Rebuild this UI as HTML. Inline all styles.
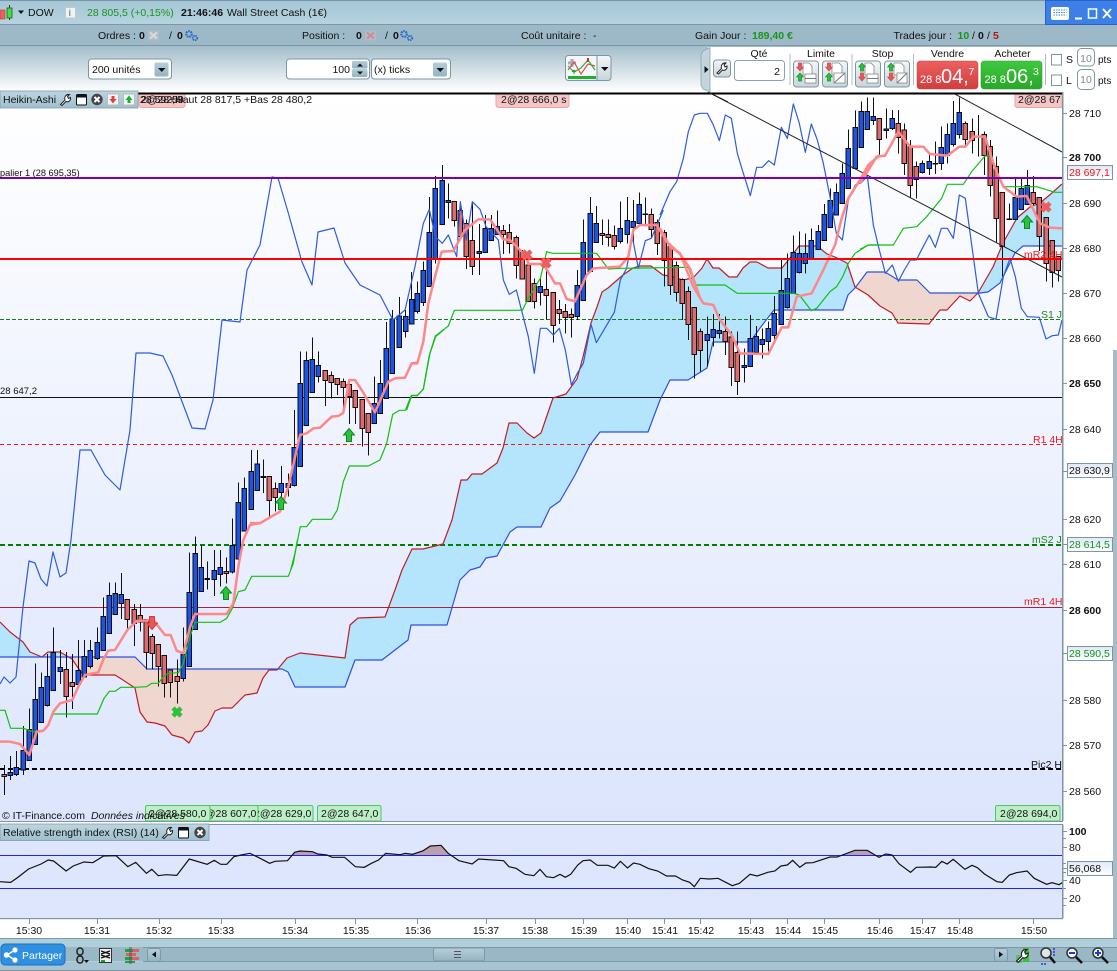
<!DOCTYPE html>
<html>
<head>
<meta charset="utf-8">
<style>
html,body{margin:0;padding:0;background:#fff;width:1117px;height:971px;overflow:hidden}
svg{display:block;position:absolute;left:0;top:0}
text{font-family:"Liberation Sans",sans-serif;font-size:10.5px;fill:#111}
.w{stroke:#111;stroke-width:3;fill:none}
.b{fill:#1a55e8;stroke:#0b0b18;stroke-width:3}
.r{fill:#de6c6c;stroke:#1a0a0a;stroke-width:3}
.nb{font-weight:bold}
.k{fill:none;stroke-linejoin:round}
</style>
</head>
<body>
<svg width="1117" height="971" viewBox="0 0 1117 971" xmlns="http://www.w3.org/2000/svg">
<defs>
<linearGradient id="bg" x1="0" y1="0" x2="0" y2="1"><stop offset="0" stop-color="#ffffff"/><stop offset="1" stop-color="#dce5fd"/></linearGradient>
<linearGradient id="g1" x1="0" y1="0" x2="0" y2="1"><stop offset="0" stop-color="#a4c6d6"/><stop offset="1" stop-color="#b6d3df"/></linearGradient>
<linearGradient id="g3" x1="0" y1="0" x2="0" y2="1"><stop offset="0" stop-color="#a2bdca"/><stop offset="1" stop-color="#ffffff"/></linearGradient>
<linearGradient id="tab" x1="0" y1="0" x2="0" y2="1"><stop offset="0" stop-color="#bcd6e1"/><stop offset="1" stop-color="#9fbfcc"/></linearGradient>
<linearGradient id="btn" x1="0" y1="0" x2="0" y2="1"><stop offset="0" stop-color="#b5cfda"/><stop offset="1" stop-color="#93b3c2"/></linearGradient>
<linearGradient id="ven" x1="0" y1="0" x2="0" y2="1"><stop offset="0" stop-color="#ec6060"/><stop offset="1" stop-color="#d23e3e"/></linearGradient>
<linearGradient id="ach" x1="0" y1="0" x2="0" y2="1"><stop offset="0" stop-color="#40c840"/><stop offset="1" stop-color="#28a828"/></linearGradient>
<linearGradient id="box" x1="0" y1="0" x2="0" y2="1"><stop offset="0" stop-color="#dfe8f6"/><stop offset="1" stop-color="#ffffff"/></linearGradient>
<linearGradient id="ord" x1="0" y1="0" x2="0" y2="1"><stop offset="0" stop-color="#f4f7f8"/><stop offset="1" stop-color="#c7d5dc"/></linearGradient>
<clipPath id="chart"><rect x="0" y="94" width="1062" height="727"/></clipPath>
<clipPath id="cb"><rect x="0" y="0" width="73" height="971"/><rect x="278" y="0" width="577" height="971"/><rect x="978" y="0" width="84" height="971"/></clipPath>
<clipPath id="cp"><rect x="73" y="0" width="205" height="971"/><rect x="855" y="0" width="123" height="971"/></clipPath>
<path id="cloud" d="M0 622L10 632 23 642 30 652 42 657 48 652 60 652 72 659 83 675 115 675 123 680 135 688 140 712 147 722 155 723 165 726 172 735 183 738 189 743 195 732 202 731 208 725 215 711 222 708 232 708 245 695 257 693 263 678 269 670 277 670 287 658 300 653 345 658 350 625 358 618 385 617 395 590 402 570 412 549 423 549 443 544 452 520 461 480 467 480 472 474 482 474 497 463 503 448 509 423 517 423 527 433 534 438 541 433 553 398 566 394 577 379 583 357 591 323 597 307 602 292 608 288 623 275 633 268 640 266 651 266 663 275 670 276 683 280 693 278 702 268 707 259 713 268 719 268 729 277 737 277 743 268 750 262 757 262 768 268 782 268 790 258 799 246 817 246 827 254 835 257 847 263 855 287 868 295 880 306 892 313 898 323 929 324 940 310 947 310 960 296 970 301 978 293 993 267 1003 243 1017 218 1030 207 1040 203 1052 193 1062 184L1062 246 1023 246 1015 253 1000 283 988 292 980 293 930 293 917 280 898 280 885 272 867 272 855 288 848 295 843 310 774 310 760 328 750 342 713 342 707 368 688 380 670 380 660 400 648 432 600 432 590 445 575 475 560 501 550 508 541 527 517 527 510 532 497 556 486 558 480 567 470 570 460 580 447 625 411 625 408 640 382 660 355 660 345 687 295 687 288 672 282 669 147 669 135 657 0 657Z"/>
<path id="wr" d="M0.5 10.5L5 6C4 3 6 0 9.5 0.5L7.5 2.5 8.5 4.5 10.5 3.500C11 7 8 8.5 6 7.5L2 11.5Z" fill="#fff" stroke="#222" stroke-width="1"/>
<path id="up" d="M0 -6.5L5.5 0H2.5V6.5H-2.5V0H-5.5Z" fill="#2cc03c" stroke="#0f8a20" stroke-width="1"/>
<path id="dn" d="M0 6.5L5.5 0H2.5V-6.5H-2.5V0H-5.5Z" fill="#e85858" stroke="#d04040" stroke-width="1"/>
<path id="xr" d="M-4 -4L4 4M4 -4L-4 4" fill="none" stroke-width="4.5"/>
<g id="gear"><circle cx="4" cy="4" r="2.8" fill="none" stroke="#2468c8" stroke-width="2" stroke-dasharray="1.6 .8"/><circle cx="10" cy="8" r="2.2" fill="none" stroke="#2468c8" stroke-width="1.8" stroke-dasharray="1.4 .7"/></g>
<g id="ci"><circle cx="6" cy="6" r="5.7" fill="#444"/><path d="M3.5 3.5L8.5 8.5M8.5 3.5L3.5 8.5" stroke="#fff" stroke-width="2"/></g>
<g id="wi"><rect x=".5" y=".5" width="10" height="10.5" rx="1" fill="#fff" stroke="#111"/><rect x=".5" y=".5" width="10" height="3" fill="#111"/></g>
</defs>

<!-- top bars -->
<rect x="0" y="0" width="1117" height="25" fill="url(#g1)"/>
<rect x="0" y="0" width="1117" height="1" fill="#7896a6"/>
<rect x="0" y="24" width="1117" height="1" fill="#7c98a8"/>
<rect x="0" y="25" width="1117" height="21" fill="#9db8c6"/>
<rect x="0" y="45" width="1117" height="1.5" fill="#7a98a8"/>
<rect x="0" y="46" width="1117" height="46" fill="url(#g3)"/>

<!-- main chart background -->
<rect x="0" y="92" width="1062" height="729" fill="url(#bg)"/>
<rect x="1063" y="92" width="54" height="846" fill="#fff"/>

<!-- chart -->
<g clip-path="url(#chart)">
<use href="#cloud" fill="#b4e5fc" clip-path="url(#cb)"/>
<use href="#cloud" fill="#efd6cf" clip-path="url(#cp)"/>
<path d="M0 319.5H1062" stroke="#1a7a1a" stroke-dasharray="4 2" stroke-width="1"/>
<path d="M0 397.5H1062" stroke="#111" stroke-width="1"/>
<path d="M0 444.5H1062" stroke="#f01818" stroke-dasharray="4 3" stroke-width="1"/>
<path d="M0 545H1062" stroke="#008000" stroke-dasharray="5 3" stroke-width="2"/>
<path d="M0 607.5H1062" stroke="#a82238" stroke-width="1"/>
<path d="M0 769H1062" stroke="#000" stroke-dasharray="5 3" stroke-width="2"/>

<!-- senkou lines -->
<path class="k" stroke="#c21e22" stroke-width="1.2" d="M0 622L10 632 23 642 30 652 42 657 48 652 60 652 72 659 83 675 115 675 123 680 135 688 140 712 147 722 155 723 165 726 172 735 183 738 189 743 195 732 202 731 208 725 215 711 222 708 232 708 245 695 257 693 263 678 269 670 277 670 287 658 300 653 345 658 350 625 358 618 385 617 395 590 402 570 412 549 423 549 443 544 452 520 461 480 467 480 472 474 482 474 497 463 503 448 509 423 517 423 527 433 534 438 541 433 553 398 566 394 577 379 583 357 591 323 597 307 602 292 608 288 623 275 633 268 640 266 651 266 663 275 670 276 683 280 693 278 702 268 707 259 713 268 719 268 729 277 737 277 743 268 750 262 757 262 768 268 782 268 790 258 799 246 817 246 827 254 835 257 847 263 855 287 868 295 880 306 892 313 898 323 929 324 940 310 947 310 960 296 970 301 978 293 993 267 1003 243 1017 218 1030 207 1040 203 1052 193 1062 184"/>
<path class="k" stroke="#3050e0" stroke-width="1.2" d="M0 657L135 657 147 669 282 669 288 672 295 687 345 687 355 660 382 660 408 640 411 625 447 625 460 580 470 570 480 567 486 558 497 556 510 532 517 527 541 527 550 508 560 501 575 475 590 445 600 432 648 432 660 400 670 380 688 380 707 368 713 342 750 342 760 328 774 310 843 310 848 295 855 288 867 272 885 272 898 280 917 280 930 293 980 293 988 292 1000 283 1015 253 1023 246 1062 246"/>

<!-- candles -->
<g shape-rendering="crispEdges">
<g transform="translate(0,540) scale(.33333)">
<path class="w" d="M13 675V765M31 648V720M49 633V708M70 558V705M88 505V660M106 370V615M124 397V548M142 342V500M160 262V452M181 330V432M199 336V533M217 342V507M235 300V436M253 300V412M271 300V385M292 262V360M310 172V332M328 127V280M346 127V223M364 99V237M382 178V265M403 192V318M421 192V275M439 238V388M457 282V388M475 313V440M493 346V473M511 390V473M532 358V490M550 262V425M568 38V380M586 -10V270M604 16V155M622 64V148M643 30V168M661 30V140M679 52V130"/>
<path class="b" transform="translate(-1 0)" d="M25 697h14V707H25zM43 682h14V703H43zM64 631h14V690H64zM82 568h14V661H82zM100 478h14V613H100zM118 442h14V547H118zM136 409h14V497H136zM154 337h14V451H154zM175 382h14V394H175zM229 391h14V433H229zM247 349h14V411H247zM265 331h14V379H265zM286 307h14V355H286zM304 229h14V331H304zM322 166h14V280H322zM340 160h14V223H340zM358 163h14V191H358zM544 343h14V415H544zM562 157h14V379H562zM580 40h14V268H580zM598 82h14V154H598zM616 116h14V118H616zM637 91h14V118H637zM655 82h14V103H655z"/>
<path class="r" transform="translate(-1 0)" d="M7 703h14V709H7zM193 388h14V469H193zM211 427h14V439H211zM376 178h14V238H376zM397 208h14V250H397zM415 226h14V246H415zM433 238h14V337H433zM451 289h14V340H451zM469 313h14V379H469zM487 346h14V430H487zM505 390h14V427H505zM526 409h14V424H526zM673 94h14V100H673z"/>
</g>
<g transform="translate(225,440) scale(.33333)">
<path class="w" d="M22 235V400M40 127V360M58 112V273M79 30V210M97 30V152"/>
<path class="b" transform="translate(-1 0)" d="M16 316h14V396H16zM34 187h14V357H34zM52 145h14V273H52zM73 94h14V208H73zM91 72h14V152H91z"/>
</g>
<g transform="translate(260,330) scale(.33333)">
<path class="w" d="M10 388V489M28 438V565M46 457V545M64 408V520M85 430V500M103 240V470M121 65V410M139 65V287M157 22V187M175 64V158M196 120V228M214 125V205M232 145V195M250 145V240M268 165V282M286 180V282M307 208V350M325 250V377M343 140V282M361 90V250M379 -24V205M397 -60V130M418 -99V52"/>
<path class="b" transform="translate(-1 0)" d="M4 439h14V442H4zM58 460h14V487H58zM79 460h14V473H79zM97 352h14V467H97zM115 160h14V409H115zM133 91h14V286H133zM151 88h14V187H151zM169 106h14V139H169zM337 220h14V280H337zM355 160h14V250H355zM373 55h14V205H373zM391 -33h14V130H391zM412 -42h14V52H412z"/>
<path class="r" transform="translate(-1 0)" d="M22 439h14V511H22zM40 476h14V503H40zM190 121h14V151H190zM208 136h14V157H208zM226 145h14V163H226zM244 154h14V172H244zM262 163h14V199H262zM280 182h14V233H280zM301 208h14V295H301zM319 250h14V307H319z"/>
</g>
<g transform="translate(400,150) scale(.33333)">
<path class="w" d="M17 480V563M35 366V522M52 395V490M70 335V468M88 141V410M106 78V340M127 45V223M145 100V205M163 155V230M181 155V270M199 208V357M217 155V375M238 222V375M256 195V307M274 195V272M292 181V255M310 225V312M328 222V310M349 256V385M367 300V388M385 335V455M403 385V475M421 385V466M439 335V508M460 427V578M478 450V522M496 462V550M514 475V563M532 360V510M550 208V450M571 141V365M589 168V277M607 208V285M625 208V290M643 226V298M661 155V280M682 141V280M700 150V280M718 127V230M736 142V230M754 175V265M772 208V315M793 240V410M811 280V435M829 335V455M847 385V510M865 410V570"/>
<path class="b" transform="translate(-1 0)" d="M11 499h14V544H11zM29 448h14V522H29zM46 430h14V484H46zM64 361h14V457H64zM82 247h14V409H82zM100 115h14V325H100zM121 91h14V223H121zM139 151h14V157H139zM232 304h14V311H232zM250 235h14V307H250zM268 235h14V271H268zM286 229h14V254H286zM415 409h14V427H415zM526 406h14V499H526zM544 277h14V451H544zM565 190h14V364H565zM583 220h14V277H583zM655 235h14V274H655zM676 211h14V253H676zM694 214h14V232H694zM712 163h14V220H712zM730 192h14V194H730z"/>
<path class="r" transform="translate(-1 0)" d="M157 154h14V211H157zM175 181h14V260H175zM193 220h14V319H193zM211 271h14V349H211zM304 241h14V254H304zM322 247h14V281H322zM343 262h14V347H343zM361 306h14V387H361zM379 345h14V454H379zM397 400h14V454H397zM433 418h14V436H433zM454 427h14V527H454zM472 478h14V490H472zM490 484h14V502H490zM508 493h14V502H508zM601 250h14V256H601zM619 253h14V262H619zM637 256h14V290H637zM748 193h14V238H748zM766 217h14V280H766zM787 247h14V331H787zM805 289h14V406H805zM823 346h14V427H823zM841 388h14V460H841zM859 424h14V523H859z"/>
</g>
<g transform="translate(660,90) scale(.33333)">
<path class="w" d="M103 652V865M121 715V845M142 680V830M160 672V770M178 672V745M196 680V795M214 725V888M232 725V915M253 775V878M271 675V830M289 708V790M307 715V805M325 695V795M343 618V750M364 510V703M382 490V655M400 436V610M418 425V550M436 430V550M454 415V510M475 405V480M493 342V451M511 295V412M529 280V376M547 220V340M565 118V295M586 62V235M604 35V172M622 22V118M640 22V105"/>
<path class="b" transform="translate(-1 0)" d="M136 733h14V751H136zM154 718h14V742H154zM172 721h14V730H172zM247 826h14V832H247zM265 745h14V829H265zM283 739h14V787H283zM301 748h14V763H301zM319 715h14V754H319zM337 670h14V736H337zM358 601h14V703H358zM376 565h14V652H376zM394 487h14V610H394zM412 490h14V547H412zM430 490h14V520H430zM448 451h14V507H448zM469 424h14V478H469zM487 373h14V451H487zM505 331h14V412H505zM523 307h14V375H523zM541 250h14V340H541zM559 175h14V295H559zM580 112h14V235H580zM598 64h14V172H598zM616 64h14V118H616zM634 79h14V92H634z"/>
<path class="r" transform="translate(-1 0)" d="M97 652h14V793H97zM115 725h14V781H115zM190 725h14V755H190zM208 741h14V832H208zM226 787h14V874H226z"/>
</g>
<g transform="translate(860,90) scale(.33333)">
<path class="w" d="M58 85V195M79 55V145M97 60V120M115 60V190M133 100V255M151 150V322M169 215V325M187 212V250M208 190V255M226 155V252M244 110V240M262 100V220M280 33V170M298 22V145M316 95V170M337 85V190M355 75V200M373 125V255M391 150V320M409 200V457M427 307V560M448 340V390M466 265V390M484 265V360M502 240V345M520 258V345M538 322V483M559 382V575M577 451V592M595 500V575"/>
<path class="b" transform="translate(-1 0)" d="M73 117h14V121H73zM91 85h14V115H91zM181 220h14V247H181zM202 214h14V235H202zM220 220h14V222H220zM238 172h14V221H238zM256 133h14V196H256zM274 100h14V163H274zM292 67h14V133H292zM442 387h14V389H442zM460 322h14V388H460zM478 295h14V358H478zM496 286h14V343H496z"/>
<path class="r" transform="translate(-1 0)" d="M52 85h14V148H52zM109 100h14V142H109zM127 120h14V220H127zM145 170h14V287H145zM163 229h14V268H163zM310 100h14V148H310zM331 124h14V151H331zM349 138h14V141H349zM367 133h14V196H367zM385 169h14V286H385zM403 229h14V385H403zM421 307h14V470H421zM514 307h14V340H514zM532 322h14V439H532zM553 382h14V520H553zM571 451h14V547H571zM589 500h14V541H589z"/>
</g>
</g>

<!-- chikou blue -->
<path class="k" stroke="#2e5ddc" stroke-width="1.2" d="M0 684L4 677 10 683 16 677 23 607 29 561 35 563 41 579 47 586 53 552 60 577 66 573 71 540 80 450 91 450 105 475 120 490 130 430 136 353 150 353 163 356 172 375 192 428 205 429 213 400 222 320 240 322 247 270 260 245 272 177 278 178 288 212 302 262 312 285 318 232 334 228 345 263 360 285 380 295 393 320 405 310"/>
<g transform="translate(400,150) scale(.33333)"><path class="k" stroke="#2e5ddc" stroke-width="3.6" d="M15 480L45 350 70 220 88 178 106 260 127 280 145 255 170 320 181 155 199 270 217 155 240 178 258 230 295 270 310 390 328 433 349 420 385 560 403 670 421 535 440 535 460 555 478 535 496 600 514 705 532 670 550 640 573 523 589 578 643 487 661 390 680 355 697 260 715 355 736 272 754 265 790 180"/></g>
<g transform="translate(660,90) scale(.33333)"><path class="k" stroke="#2e5ddc" stroke-width="3.6" d="M0 375L30 305 50 275 70 205 85 125 103 75 120 70 142 70 160 105 178 152 196 75 214 85 232 190 250 250 271 317 290 232 307 232 326 212 343 225 364 112 382 145 400 42 418 100 436 187 454 102 472 150 490 220 510 320 529 430 547 450 565 330 586 285 604 278 622 258 640 405 658 480"/></g>
<g transform="translate(860,90) scale(.33333)"><path class="k" stroke="#2e5ddc" stroke-width="3.6" d="M58 480L76 550 97 525 115 574 133 540 151 510 169 510 187 475 208 435 226 472 244 415 262 415 280 445 298 315 316 325 355 610 385 680 408 688 430 560 450 505 466 560 484 655 502 680 538 682 558 747 577 737 595 735 606 690"/></g>

<!-- green line -->
<g transform="translate(0,540) scale(.33333)"><path class="k" stroke="#12c012" stroke-width="3.6" d="M0 511L15 511 32 565 70 565 85 570 100 575 125 575 145 555 160 522 292 522 312 475 328 454 345 454 362 442 405 442 440 440 455 430 475 430 490 410 505 400 535 398 550 370 570 290 585 247 660 247 680 235 697 205 715 155 735 150 755 109 865 109 880 70 892 0"/></g>
<g transform="translate(260,330) scale(.33333)"><path class="k" stroke="#12c012" stroke-width="3.6" d="M92 720L105 670 121 590 140 590 157 568 215 568 232 540 250 455 268 408 325 408 360 390 380 340 398 253 418 241 436 241 454 196 472 196 490 178 510 70 527 20 550 0"/></g>
<g transform="translate(400,150) scale(.33333)"><path class="k" stroke="#12c012" stroke-width="3.6" d="M20 780L35 737 52 737 70 717 88 615 106 558 145 528 163 481 367 481 385 445 421 385 440 305 457 310 590 310 625 357 660 355 865 352 885 405 900 405"/></g>
<g transform="translate(660,90) scale(.33333)"><path class="k" stroke="#12c012" stroke-width="3.6" d="M105 585L195 585 232 610 400 610 418 615 454 662 470 655 510 605 530 590 548 560 565 520 585 490 625 465 660 465"/></g>
<g transform="translate(860,90) scale(.33333)"><path class="k" stroke="#12c012" stroke-width="3.6" d="M0 478L25 465 100 465 130 415 170 410 200 380 245 325 262 283 310 283 335 245 375 198 390 198 430 290 530 290 585 307 606 307"/></g>

<!-- trend lines -->
<path d="M708 92L1062 277M953 93L1062 152" stroke="#222" stroke-width="1" fill="none"/>

<!-- salmon EMA -->
<g fill="none" stroke="#ff8787" stroke-width="7.5" stroke-linejoin="round">
<g transform="translate(0,540) scale(.33333)"><path d="M0 605L30 605 60 612 88 645 110 575 130 572 145 555 160 515 180 490 217 480 235 440 255 405 295 397 310 358 325 332 345 330 382 270 410 243 460 240 495 285 512 285 530 332 550 340 570 262 585 222 680 222 700 190 715 80 730 0 750 -45 780 -51"/></g>
<g transform="translate(260,330) scale(.33333)"><path d="M-30 579L0 580 30 562 60 545 85 470 120 315 140 310 160 295 180 293 215 260 235 258 250 248 268 150 285 150 305 180 345 247 385 155 405 145 435 143 455 100 472 98"/></g>
<g transform="translate(400,150) scale(.33333)"><path d="M35 640L52 640 70 575 85 460 105 380 125 305 160 303 195 240 235 208 270 208 310 268 330 270 380 320 385 342 430 342 465 400 480 400 500 447 525 454 560 375 580 355 660 350 685 320 700 240 720 225 770 225 800 275 840 312 870 355 900 445"/></g>
<g transform="translate(660,90) scale(.33333)"><path d="M0 415L30 470 60 490 100 590 130 640 160 645 180 690 215 735 240 790 325 792 365 712 385 712 410 620 455 610 490 540 525 465 545 385 565 325 600 270 625 225 660 195"/></g>
<g transform="translate(860,90) scale(.33333)"><path d="M0 280L50 200 75 197 115 125 150 170 190 170 210 192 262 197 298 170 316 170 340 140 375 140 405 235 430 290 470 320 500 318 540 400 570 413 606 415"/></g>
</g>

<!-- thick lines on top -->
<rect x="0" y="177" width="1062" height="2" fill="#7a00b0"/>
<rect x="0" y="258" width="1062" height="2" fill="#ff0000"/>

<!-- markers -->
<use href="#up" x="349" y="435"/>
<use href="#up" x="281" y="503"/>
<use href="#up" x="226" y="593"/>
<use href="#up" x="1027" y="222"/>
<use href="#dn" x="152" y="623"/>
<use href="#xr" x="177" y="712" stroke="#2cc03c"/>
<use href="#xr" x="527" y="255" stroke="#ec5f5f"/>
<use href="#xr" x="546" y="263" stroke="#ec5f5f"/>
<use href="#xr" x="1046" y="207" stroke="#ec5f5f"/>

<!-- chart text -->
<text x="0" y="176" style="font-size:9.2px">palier 1 (28 695,35)</text>
<text x="0" y="394" style="font-size:9.5px">28 647,2</text>
<text x="1033" y="443" style="fill:#f01818">R1 4H</text>
<text x="1032" y="543" style="fill:#1a8a1a">mS2 J</text>
<text x="1024" y="605" style="fill:#f01818">mR1 4H</text>
<text x="1041" y="318" style="fill:#1a8a1a">S1 J</text>
<text x="1024" y="258" style="fill:#f01818">mR2 4H</text>
<text x="1031" y="768">Pic2 H</text>

<!-- green labels -->
<path d="M317.5 821V807.5q0-2 2-2H379q2 0 2 2V821z" fill="#bdeec6" stroke="#46cc5c"/>
<text x="321" y="817">2@28 647,0</text>
<path d="M250 821V807.5q0-2 2-2H311q2 0 2 2V821z" fill="#bdeec6" stroke="#46cc5c"/>
<text x="254" y="817">2@28 629,0</text>
<path d="M195 821V807.5q0-2 2-2H256q2 0 2 2V821z" fill="#bdeec6" stroke="#46cc5c"/>
<text x="199" y="817">2@28 607,0</text>
<path d="M145.500 821V807.5q0-2 2-2H208q2 0 2 2V821z" fill="#bdeec6" stroke="#46cc5c"/>
<text x="149" y="817">2@28 580,0</text>
<path d="M995.500 821V807.5q0-2 2-2H1058q2 0 2 2V821z" fill="#bdeec6" stroke="#46cc5c"/>
<text x="1000" y="817">2@28 694,0</text>
<text x="2" y="819">© IT-Finance.com  <tspan font-style="italic" dx="3">Données indicatives</tspan></text>
</g>

<!-- top black line & pink labels -->
<path d="M139 94V104.500q0 3 3 3H182q3 0 3-3V94z" fill="#f5c6c6" stroke="#eaa4a4"/>
<text x="140" y="103">28 592,4</text>
<text x="141" y="103">2@28 59</text>
<text x="169" y="103">+Haut 28 817,5 +Bas 28 480,2</text>
<path d="M496 94V104.500q0 3 3 3H566q3 0 3-3V94z" fill="#f5c6c6" stroke="#eaa4a4"/>
<text x="501" y="103">2@28 666,0 s</text>
<path d="M1015 94V104.500q0 3 3 3H1062V94z" fill="#f5c6c6" stroke="#eaa4a4"/>
<text x="1018" y="103">2@28 67</text>
<rect x="130" y="92.500" width="932" height="2" fill="#000"/>
<path d="M708 92L728 102" stroke="#222" stroke-width="1"/>

<!-- Heikin-Ashi tab -->
<rect x="0" y="91" width="138" height="17" fill="url(#tab)" stroke="#7f9cab" stroke-width=".8"/>
<text x="3" y="103">Heikin-Ashi</text>
<use href="#wr" x="60" y="94"/>
<use href="#wi" x="76" y="94"/>
<use href="#ci" x="91" y="93.500"/>
<rect x="107.500" y="94" width="11" height="11" fill="#f5f5f5" stroke="#bbb"/>
<path d="M113 103.500L109.500 99H111.500V96H114.500V99H116.500Z" fill="#e04040"/>
<rect x="123.500" y="94" width="11" height="11" fill="#f5f5f5" stroke="#bbb"/>
<path d="M129 95.500L125.500 100H127.500V103H130.500V100H132.500Z" fill="#18b030"/>

<!-- axis -->
<rect x="1062" y="92" width="1.500" height="826" fill="#7e95a3"/>
<path d="M1063 113.500h4M1063 157.500h4M1063 203.500h4M1063 248.500h4M1063 293.500h4M1063 338.500h4M1063 383.500h4M1063 429.500h4M1063 471.500h4M1063 519.500h4M1063 544.500h4M1063 564.500h4M1063 610.500h4M1063 653.500h4M1063 700.500h4M1063 745.500h4M1063 791.500h4" stroke="#7e95a3"/>
<text x="1069" y="117">28 710</text>
<text x="1069" y="161" class="nb">28 700</text>
<text x="1069" y="207">28 690</text>
<text x="1069" y="252">28 680</text>
<text x="1069" y="297">28 670</text>
<text x="1069" y="342">28 660</text>
<text x="1069" y="387" class="nb">28 650</text>
<text x="1069" y="433">28 640</text>
<text x="1069" y="523">28 620</text>
<text x="1069" y="568">28 610</text>
<text x="1069" y="614" class="nb">28 600</text>
<text x="1069" y="704">28 580</text>
<text x="1069" y="749">28 570</text>
<text x="1069" y="795">28 560</text>
<rect x="1067.500" y="165.500" width="45" height="14" fill="url(#box)" stroke="#7e95a3"/><text x="1069" y="176" style="fill:#f01818">28 697,1</text>
<rect x="1067.500" y="463.500" width="45" height="14" fill="url(#box)" stroke="#7e95a3"/><text x="1069" y="474">28 630,9</text>
<rect x="1067.500" y="537.500" width="45" height="14" fill="url(#box)" stroke="#7e95a3"/><text x="1069" y="548" style="fill:#12941c">28 614,5</text>
<rect x="1067.500" y="646.500" width="45" height="14" fill="url(#box)" stroke="#7e95a3"/><text x="1069" y="657" style="fill:#12941c">28 590,5</text>

<!-- separator -->
<rect x="0" y="821" width="1117" height="3.500" fill="#fff"/>
<rect x="0" y="821" width="1063" height="1" fill="#7e95a3"/>
<rect x="1113" y="350" width="4" height="588" fill="#a8bcc8"/>

<!-- RSI pane -->
<rect x="0" y="824" width="1062" height="94" fill="#dde6fd"/>
<rect x="0" y="824" width="1063" height="1" fill="#7e95a3"/>
<g fill="#bd9eac">
<g transform="translate(0,790) scale(.35714,.33333)">
<path d="M815 197L825 187 840 183 875 185 890 192 900 197ZM1070 197L1080 190 1120 194 1135 190 1155 193 1185 182 1205 168 1235 166 1255 190 1265 197Z"/>
</g>
<g transform="translate(560,790) scale(.3552,.33333)"><path d="M790 197L830 181 865 181 890 197Z"/></g>
</g>
<path d="M0 855.500H1062M0 888.500H1062" stroke="#2424e0" stroke-width="1"/>
<g transform="translate(0,790) scale(.35714,.33333)"><path d="M0 275L30 277 50 262 80 237 115 222 135 210 150 213 185 243 205 228 235 216 260 218 290 198 325 197 358 230 380 217 410 250 425 238 443 257 465 254 495 256 530 207 580 223 600 211 618 223 635 223 655 200 675 195 700 190 725 203 755 220 770 214 805 212 825 187 840 183 875 185 890 192 915 195 930 202 965 202 995 230 1020 232 1040 220 1060 210 1080 190 1120 194 1135 190 1155 193 1185 182 1205 168 1235 166 1255 190 1285 212 1322 222 1340 207 1410 212 1425 230 1445 235 1470 253 1495 257 1512 238 1530 260 1550 263 1568 253" fill="none" stroke="#111" stroke-width="1.2" vector-effect="non-scaling-stroke"/></g>
<g transform="translate(560,790) scale(.3552,.33333)"><path d="M0 253L15 262 30 253 50 225 65 212 85 210 105 226 135 226 153 234 170 214 190 234 207 219 225 223 250 236 275 243 300 258 325 258 345 270 365 277 378 290 395 265 420 267 445 265 485 287 505 280 535 253 555 258 585 247 605 243 622 228 640 225 655 211 675 232 692 219 712 218 760 201 780 201 830 181 865 181 898 202 917 192 935 195 955 222 987 247 1003 232 1045 231 1058 232 1075 214 1090 222 1107 208 1140 238 1160 226 1175 233 1195 252 1215 265 1230 275 1245 277 1265 255 1285 248 1315 243 1335 265 1370 283 1385 278 1405 284 1414 278" fill="none" stroke="#111" stroke-width="1.2" vector-effect="non-scaling-stroke"/></g>

<!-- RSI tab -->
<rect x="0" y="824" width="209" height="16.500" fill="url(#tab)" stroke="#7f9cab" stroke-width=".8"/>
<text x="3" y="836">Relative strength index (RSI) (14)</text>
<use href="#wr" x="162" y="827"/>
<use href="#wi" x="178" y="827"/>
<use href="#ci" x="194" y="826.500"/>

<!-- RSI axis -->
<path d="M1063 831.500h4M1063 838.500h3M1063 847.500h4M1063 863.500h3M1063 868.500h4M1063 872.500h3M1063 880.500h4M1063 888.500h3M1063 898.500h4M1063 905.500h3" stroke="#7e95a3"/>
<text x="1069" y="835" class="nb">100</text>
<text x="1069" y="851">80</text>
<text x="1069" y="884">40</text>
<text x="1069" y="902">20</text>
<rect x="1067.500" y="861.500" width="45" height="14" fill="url(#box)" stroke="#7e95a3"/><text x="1069" y="872">56,068</text>

<!-- x axis -->
<rect x="0" y="918" width="1063" height="1.200" fill="#7e95a3"/>
<path d="M29.500 919v5M97.500 919v5M159.500 919v5M221.500 919v5M295.500 919v5M355.500 919v5M417.500 919v5M486.500 919v5M535.500 919v5M583.500 919v5M627.500 919v5M664.500 919v5M700.500 919v5M750.500 919v5M787.500 919v5M824.500 919v5M879.500 919v5M922.500 919v5M959.500 919v5M1033.500 919v5" stroke="#7e95a3"/>
<g text-anchor="middle">
<text x="29" y="934">15:30</text><text x="97" y="934">15:31</text><text x="159" y="934">15:32</text><text x="221" y="934">15:33</text><text x="295" y="934">15:34</text><text x="356" y="934">15:35</text><text x="418" y="934">15:36</text><text x="486" y="934">15:37</text><text x="535" y="934">15:38</text><text x="584" y="934">15:39</text><text x="628" y="934">15:40</text><text x="665" y="934">15:41</text><text x="701" y="934">15:42</text><text x="751" y="934">15:43</text><text x="788" y="934">15:44</text><text x="825" y="934">15:45</text><text x="880" y="934">15:46</text><text x="923" y="934">15:47</text><text x="960" y="934">15:48</text><text x="1034" y="934">15:50</text>
</g>

<!-- bottom bar -->
<rect x="0" y="938" width="1117" height="33" fill="#b0cfdb"/>
<rect x="0" y="938" width="1117" height="1" fill="#7e98a8"/>
<rect x="0" y="947" width="1117" height="14" fill="#9ab7c5"/>
<rect x="143" y="947" width="974" height="1" fill="#7e98a8"/>
<rect x="143" y="961" width="974" height="1" fill="#7e98a8"/>
<rect x="0" y="962" width="1117" height="8" fill="#a6c4d1"/>
<rect x="0" y="970" width="1117" height="1" fill="#7e98a8"/>
<rect x="1" y="944" width="64" height="21" rx="4" fill="#2f8fe0" stroke="#1a70c0"/>
<path d="M7 955L15 950M7 955L15 960" stroke="#fff" stroke-width="1.500"/>
<circle cx="6.500" cy="955" r="2.800" fill="#fff"/><circle cx="15" cy="950" r="2.600" fill="#fff"/><circle cx="15" cy="960" r="2.600" fill="#fff"/>
<text x="22" y="959" style="fill:#fff;font-size:10.5px">Partager</text>
<!-- left icons -->
<g fill="none" stroke="#222" stroke-width="1.500"><rect x="77" y="948" width="6" height="7" rx="3"/><rect x="77" y="956" width="6" height="7" rx="3"/></g>
<path d="M84 960h5l-2.500 3z" fill="#111"/>
<rect x="99.500" y="948.500" width="12" height="14" fill="#eee" stroke="#333"/>
<path d="M101 951l9 3M110 951l-9 3M101 955l9 3M110 955l-9 3" stroke="#111" stroke-width="1.200"/>
<path d="M101 960h4v2h-4z" fill="#18a030"/>
<rect x="125" y="949" width="8" height="3" fill="#28a040"/><rect x="133" y="949" width="6" height="3" fill="#e06060"/>
<rect x="126" y="953" width="10" height="3" fill="#e06060"/><rect x="125" y="957" width="7" height="3" fill="#28a040"/><rect x="132" y="957" width="7" height="3" fill="#e06060"/>
<rect x="125" y="961" width="10" height="2" fill="#28a040"/><rect x="129" y="947" width="3" height="17" fill="#555" opacity=".5"/>
<!-- scrollbar -->
<rect x="147.500" y="948.500" width="13" height="13" rx="2.500" fill="url(#btn)" stroke="#7e98a8"/>
<path d="M156 951.500v6l-4-3z" fill="#111"/>
<rect x="433.500" y="948" width="51" height="13" rx="2.500" fill="url(#btn)" stroke="#7e98a8"/>
<path d="M454 951.500h7M454 954.500h7M454 957.500h7" stroke="#556" stroke-width="1"/>
<rect x="994.500" y="948.500" width="13" height="13" rx="2.500" fill="url(#btn)" stroke="#7e98a8"/>
<path d="M999 951.500v6l4-3z" fill="#111"/>
<!-- right icons -->
<rect x="1023" y="948" width="6" height="14" fill="#3cc03c"/><rect x="1016" y="955" width="6" height="8" fill="#3cc03c" opacity=".6"/>
<use href="#wr" transform="translate(1016,949) scale(1.150)"/>
<circle cx="1046" cy="953" r="5" fill="#dfe5e8" stroke="#333" stroke-width="1.500"/><path d="M1050 957l5 6" stroke="#111" stroke-width="2.500"/>
<path d="M1054 948v8M1041 964h6" stroke="#1c3cd8" stroke-width="1.500" stroke-dasharray="2 1"/>
<circle cx="1072" cy="953" r="5" fill="#f3f6f8" stroke="#333" stroke-width="1.500"/><path d="M1076 957l6 6" stroke="#111" stroke-width="2.500"/><path d="M1069 953h6" stroke="#1c3cd8" stroke-width="2"/>
<circle cx="1098" cy="953" r="5" fill="#f3f6f8" stroke="#333" stroke-width="1.500"/><path d="M1102 957l6 6" stroke="#111" stroke-width="2.500"/><path d="M1095 953h6M1098 950v6" stroke="#1c3cd8" stroke-width="2"/>

<!-- title row -->
<rect x="0" y="4" width="5" height="9" fill="#e86060" stroke="#b03030" stroke-width=".5" transform="translate(0,6)"/>
<path d="M9.500 5v15" stroke="#333"/>
<rect x="7" y="8" width="5" height="10" fill="#44dd44" stroke="#186018" stroke-width=".8"/>
<path d="M18 10.500h6l-3 3.500z" fill="#111"/>
<text x="28" y="16">DOW</text>
<rect x="65.500" y="7.500" width="10" height="10.500" fill="#eef3f4" stroke="#bcc"/>
<text x="68.500" y="16" style="font-size:9px;fill:#888;font-weight:bold">i</text>
<text x="87" y="16" style="fill:#16961c">28 805,5 (+0,15%)</text>
<text x="181" y="16" class="nb">21:46:46</text>
<text x="227" y="16">Wall Street Cash (1€)</text>
<!-- window buttons -->
<rect x="1045.500" y="0.500" width="72" height="24" fill="#3d7fe8" stroke="#2a62c0"/>
<rect x="1051" y="7" width="18" height="13" rx="2" fill="#fff"/>
<path d="M1053.500 10h13M1053.500 12.500h13M1053.500 15h13" stroke="#3d7fe8" stroke-dasharray="1.500 1"/>
<path d="M1075 18.500h7" stroke="#fff" stroke-width="2"/>
<rect x="1088.500" y="9" width="8" height="9" fill="none" stroke="#fff" stroke-width="1.500"/>
<path d="M1103 9l8 9M1111 9l-8 9" stroke="#fff" stroke-width="1.800"/>

<!-- row 2 -->
<text x="98" y="39">Ordres :</text>
<text x="139" y="39" class="nb">0</text>
<rect x="148" y="30.500" width="11" height="10" fill="#b4bcc0"/><path d="M150 32.500l7 6M157 32.500l-7 6" stroke="#d8dcde" stroke-width="2"/>
<text x="169" y="39">/</text>
<text x="177" y="39" class="nb">0</text>
<use href="#gear" x="185" y="30"/>
<text x="302" y="39">Position :</text>
<text x="356" y="39" class="nb">0</text>
<rect x="365" y="30.500" width="11" height="10" fill="#b4bcc0"/><path d="M367 32.500l7 6M374 32.500l-7 6" stroke="#cf8a9a" stroke-width="2"/>
<text x="385" y="39">/</text>
<text x="393" y="39" class="nb">0</text>
<use href="#gear" x="400" y="30"/>
<text x="521" y="39">Coût unitaire :</text>
<text x="593" y="39">-</text>
<text x="695" y="39">Gain Jour :</text>
<text x="752" y="39" class="nb" style="fill:#16961c">189,40 €</text>
<text x="893.500" y="39">Trades jour :</text>
<text x="957.500" y="39" class="nb" style="fill:#16961c">10</text>
<text x="972" y="39">/</text>
<text x="978" y="39" class="nb">0</text>
<text x="987" y="39">/</text>
<text x="993" y="39" class="nb" style="fill:#b01818">5</text>

<!-- row 3 controls -->
<rect x="88.500" y="59" width="83" height="20" rx="3" fill="#fff" stroke="#7e95a3"/>
<text x="92" y="73">200 unités</text>
<rect x="154.500" y="62.500" width="14" height="14" rx="2" fill="url(#btn)"/>
<path d="M158 68h7.500l-3.750 4z" fill="#111"/>
<rect x="286.500" y="59" width="83" height="20" rx="3" fill="#fff" stroke="#7e95a3"/>
<text x="350" y="73" text-anchor="end">100</text>
<rect x="352" y="61" width="15.500" height="7.500" rx="1.500" fill="url(#btn)"/><path d="M357 66.500h6l-3-3z" fill="#111"/>
<rect x="352" y="69" width="15.500" height="8" rx="1.500" fill="url(#btn)"/><path d="M357 71.500h6l-3 3z" fill="#111"/>
<rect x="371.500" y="59" width="79" height="20" rx="3" fill="#fff" stroke="#7e95a3"/>
<text x="374" y="73">(x) ticks</text>
<rect x="433" y="62.500" width="14" height="14" rx="2" fill="url(#btn)"/>
<path d="M436.500 68h7.500l-3.750 4z" fill="#111"/>
<!-- chart icon button -->
<rect x="565.500" y="55.500" width="45.500" height="25" rx="3" fill="url(#ord)" stroke="#7e95a3"/>
<rect x="566" y="56" width="31" height="24" rx="3" fill="#f4f6f7"/>
<path d="M597 56v24" stroke="#7e95a3"/>
<path d="M568 63h8M572 59v8" stroke="#aab" stroke-width="3"/>
<path d="M568 70L574 62 581 74 588 64 595 66" fill="none" stroke="#e05050" stroke-width="1.200"/>
<path d="M568 66L574 72 581 68 588 60 595 70" fill="none" stroke="#30b040" stroke-width="1.200"/>
<rect x="568" y="76" width="28" height="3" fill="#20b030"/>
<path d="M574 74V70M574 70l-2 2M574 70l2 2" stroke="#20a030"/><path d="M588 62v-4" stroke="#d03030" stroke-width="2"/>
<path d="M601 67h7.500l-3.750 4z" fill="#111"/>

<!-- order panel -->
<rect x="708" y="47" width="409" height="45" fill="#fff"/>
<path d="M710 47.500L703 51 701 55V85L703 89 710 92Z" fill="#c2d4dc" stroke="#8ba3b0" stroke-width=".8"/>
<path d="M704.500 66l4 3.500-4 3.500z" fill="#111"/>
<rect x="713.500" y="60" width="17" height="17" rx="3" fill="url(#ord)" stroke="#7e95a3"/>
<use href="#wr" x="716.500" y="62.500"/>
<text x="759" y="57" text-anchor="middle">Qté</text>
<rect x="734.500" y="60.500" width="50" height="20" rx="3" fill="#fff" stroke="#8ba3b0"/>
<text x="780" y="75" text-anchor="end">2</text>
<path d="M790 54v31M852 54v31M913.500 54v31M1045.500 54v31" stroke="#a8bcc8"/>
<text x="821" y="57" text-anchor="middle">Limite</text>
<text x="882.500" y="57" text-anchor="middle">Stop</text>
<text x="947.500" y="57" text-anchor="middle">Vendre</text>
<text x="1012.500" y="57" text-anchor="middle">Acheter</text>
<!-- order buttons -->
<g fill="url(#ord)" stroke="#7e95a3">
<rect x="793.500" y="61" width="25" height="26" rx="3"/><rect x="822.500" y="61" width="25" height="26" rx="3"/><rect x="855.500" y="61" width="25" height="26" rx="3"/><rect x="884.500" y="61" width="25" height="26" rx="3"/>
</g>
<g fill="#fff" stroke="#888" stroke-width=".8">
<path d="M803 63h6l3 3v9h-9zM832 63h7l3 3v9h-10zM865 63h6l3 3v9h-9zM894 63h7l3 3v9h-10z"/>
<rect x="805" y="74" width="11" height="9"/><rect x="834" y="73" width="11" height="10"/><rect x="867" y="74" width="11" height="9"/><rect x="897" y="73" width="10" height="10"/>
</g>
<path d="M805 78.500h11M834 83l11-10M867 78.500h11M897 83l10-10" stroke="#777" stroke-width="1"/>
<g>
<use href="#dn" transform="translate(800,67) scale(.62)"/><use href="#up" transform="translate(800,77) scale(.62)"/>
<use href="#dn" transform="translate(829,67) scale(.62)"/><use href="#up" transform="translate(829,77) scale(.62)"/>
<use href="#up" transform="translate(862,67) scale(.62)"/><use href="#dn" transform="translate(862,77) scale(.62)"/>
<use href="#up" transform="translate(891,67) scale(.62)"/><use href="#dn" transform="translate(891,77) scale(.62)"/>
</g>
<!-- sell / buy -->
<rect x="917" y="61" width="61" height="28" rx="3" fill="url(#ven)" stroke="#c04040" stroke-width=".5"/>
<text x="920" y="83" style="fill:#fff;font-size:11px">28 8</text>
<text x="941" y="83" style="fill:#fff;font-size:20px">04,</text>
<text x="968.500" y="75" style="fill:#fff;font-size:10.5px">7</text>
<rect x="981" y="61" width="61" height="28" rx="3" fill="url(#ach)" stroke="#2a9a2a" stroke-width=".5"/>
<text x="984.500" y="83" style="fill:#fff;font-size:11px">28 8</text>
<text x="1006" y="83" style="fill:#fff;font-size:20px">06,</text>
<text x="1033" y="75" style="fill:#fff;font-size:10.5px">3</text>
<!-- S / L -->
<rect x="1051.500" y="54.500" width="10" height="10.500" fill="#fff" stroke="#7e95a3"/>
<text x="1066" y="63">S</text>
<rect x="1077.500" y="48.500" width="17" height="17.500" rx="4" fill="#fff" stroke="#7e95a3"/>
<text x="1086" y="62" text-anchor="middle" style="fill:#888">10</text>
<text x="1098" y="63" style="font-size:10px">pts</text>
<rect x="1051.500" y="75" width="10" height="10.500" fill="#fff" stroke="#7e95a3"/>
<text x="1066" y="84">L</text>
<rect x="1077.500" y="69.500" width="17" height="20" rx="4" fill="#fff" stroke="#7e95a3"/>
<text x="1086" y="83" text-anchor="middle" style="fill:#888">10</text>
<text x="1098" y="84" style="font-size:10px">pts</text>
</svg>
</body>
</html>
